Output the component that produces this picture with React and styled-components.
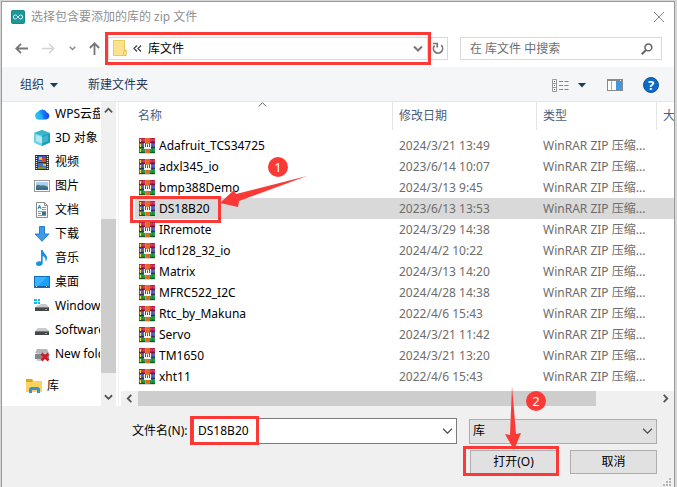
import React from "react";
import styled, { createGlobalStyle } from "styled-components";

const RED = "#fb3a38";

const GlobalStyle = createGlobalStyle`
  * { box-sizing: border-box; }
  body {
    margin: 0;
    background: #d6d6d6;
    font-family: "Noto Sans", "Noto Sans CJK SC", sans-serif;
    font-size: 12px;
    line-height: 16px;
    color: #000;
  }
  button, input, select { font: inherit; color: inherit; }
  svg { display: block; flex: none; }
`;

const Page = styled.div`
  min-height: 100vh;
  padding: 1px 2px 0 1px;
  display: flex;
  overflow: hidden;
`;

const Dialog = styled.main`
  flex: 1;
  min-width: 0;
  display: flex;
  flex-direction: column;
  background: #fff;
  border: 1px solid #999;
  border-bottom: 0;
`;

const TitleBar = styled.header`
  display: flex;
  align-items: center;
  gap: 6px;
  height: 29px;
  padding: 0 9px;
`;

const Title = styled.h1`
  flex: 1;
  margin: 0;
  font-size: 12px;
  font-weight: 400;
  color: #8f8f8f;
`;

const IconButton = styled.button`
  display: flex;
  align-items: center;
  justify-content: center;
  width: ${(p) => p.$width || 16}px;
  height: 20px;
  padding: 0;
  border: 0;
  background: transparent;
`;

const NavBar = styled.div`
  display: flex;
  align-items: center;
  height: 36px;
  padding: 6px 12px 7px 11px;
`;

const NavButtons = styled.div`
  display: flex;
  align-items: center;
  width: 95px;
  gap: 11px;
`;

const Marked = styled.div`
  position: relative;
  display: flex;
  ${(p) => p.$grow && "flex: 1; min-width: 0;"}
`;

const RedFrame = styled.span`
  position: absolute;
  inset: ${(p) => p.$inset};
  ${(p) => p.$width && `width: ${p.$width}px;`}
  border: 3px solid ${RED};
  pointer-events: none;
`;

const Address = styled.div`
  flex: 1;
  display: flex;
  align-items: center;
  gap: 6px;
  height: 23px;
  padding: 0 1px 0 4px;
  border: 1px solid #d9d9d9;
`;

const AddressText = styled.span`
  flex: 1;
`;

const Refresh = styled.button`
  display: flex;
  align-items: center;
  justify-content: center;
  width: 20px;
  height: 23px;
  padding: 0;
  border: 1px solid #d9d9d9;
  border-left: 0;
  background: #fff;
`;

const Search = styled.label`
  display: flex;
  align-items: center;
  width: 202px;
  height: 23px;
  margin-left: 12px;
  padding: 0 8px 0 9px;
  border: 1px solid #d9d9d9;
`;

const SearchInput = styled.input`
  flex: 1;
  min-width: 0;
  padding: 0;
  border: 0;
  outline: 0;
  &::placeholder { color: #6d6d6d; opacity: 1; }
`;

const Toolbar = styled.div`
  display: flex;
  align-items: center;
  height: 35px;
  padding: 2px 15px 0 18px;
  background: #f5f6f7;
  border-bottom: 1px solid #e6e7e8;
  color: #1e395b;
`;

const ToolButton = styled.button`
  display: flex;
  align-items: center;
  gap: ${(p) => p.$gap || 6}px;
  margin-right: ${(p) => p.$after || 0}px;
  padding: 0;
  border: 0;
  background: transparent;
`;

const Spacer = styled.div`
  flex: 1;
`;

const Body = styled.div`
  display: flex;
`;

const Sidebar = styled.nav`
  width: 99px;
  padding-right: 1px;
`;

const Tree = styled.ul`
  margin: 0;
  padding: 0;
  overflow: hidden;
  list-style: none;
`;

const TreeItem = styled.li`
  margin-top: ${(p) => (p.$root ? 8 : 0)}px;
  padding-left: ${(p) => (p.$root ? 24 : 32)}px;
`;

const TreeLink = styled.a`
  display: flex;
  align-items: center;
  gap: 5px;
  height: 24px;
  color: #000;
  text-decoration: none;
  white-space: nowrap;
`;

const VScroll = styled.div`
  display: flex;
  flex-direction: column;
  width: 15px;
  background: #f0f0f0;
`;

const HScroll = styled.div`
  display: flex;
  height: 15px;
  margin-left: 2px;
  background: #f0f0f0;
`;

const ScrollButton = styled.button`
  display: flex;
  align-items: center;
  justify-content: center;
  flex: none;
  width: ${(p) => (p.$wide ? 17 : 15)}px;
  height: ${(p) => (p.$wide ? 15 : 17)}px;
  padding: 0;
  border: 0;
  background: transparent;
`;

const Track = styled.div`
  flex: 1;
  display: flex;
  flex-direction: ${(p) => (p.$vertical ? "column" : "row")};
`;

const TrackGap = styled.div`
  flex: ${(p) => p.$share};
`;

const Thumb = styled.div`
  flex: ${(p) => p.$share};
  background: #cdcdcd;
`;

const Files = styled.section`
  position: relative;
  flex: 1;
  min-width: 0;
  display: flex;
  flex-direction: column;
  margin-left: 2px;
  border-left: 1px solid #f0f0f0;
`;

const SortMark = styled.span`
  position: absolute;
  top: -2px;
  left: 139px;
`;

const Table = styled.table`
  width: 100%;
  table-layout: fixed;
  border-collapse: separate;
  border-spacing: 0;
  margin-bottom: 4px;
`;

const Head = styled.th`
  height: 28px;
  padding: 0 0 0 ${(p) => (p.$first ? 19 : 6)}px;
  border-left: ${(p) => (p.$first ? 0 : 1)}px solid #e5e5e5;
  overflow: hidden;
  white-space: nowrap;
  text-align: left;
  font-weight: 400;
  color: #4c607a;
`;

const HeadSpace = styled.tr`
  height: 5px;
`;

const Row = styled.tr`
  height: 21px;
  background: linear-gradient(${(p) => (p.$selected ? "#d9d9d9, #d9d9d9" : "#fff, #fff")}) 16px 0 no-repeat;
`;

const Cell = styled.td`
  height: 21px;
  padding: 0 0 0 7px;
  overflow: hidden;
  white-space: nowrap;
  color: #6d6d6d;
`;

const NameCell = styled(Cell)`
  padding-left: 20px;
  overflow: visible;
  color: #000;
`;

const FileName = styled.div`
  position: relative;
  display: flex;
  align-items: center;
  gap: 4px;
`;

const Footer = styled.form`
  position: relative;
  flex: 1;
  display: flex;
  flex-direction: column;
  gap: 6px;
  padding: 12px 17px 13px 130px;
  background: #f0f0f0;
`;

const FooterRow = styled.div`
  display: flex;
  justify-content: ${(p) => (p.$end ? "flex-end" : "flex-start")};
  gap: ${(p) => (p.$end ? 13 : 12)}px;
`;

const NameField = styled.div`
  flex: 1;
  display: flex;
  align-items: center;
  min-width: 0;
`;

const Label = styled.label`
  width: 61px;
  white-space: nowrap;
`;

const Combo = styled.div`
  flex: 1;
  display: flex;
  align-items: center;
  min-width: 0;
  height: 26px;
  padding: 0 1px 0 4px;
  border: 1px solid #7a7a7a;
  background: #fff;
`;

const ComboInput = styled.input`
  flex: 1;
  min-width: 0;
  padding: 0;
  border: 0;
  outline: 0;
`;

const SelectBox = styled.div`
  display: grid;
  align-items: center;
  width: 188px;
  & > * { grid-area: 1 / 1; }
  & > svg { justify-self: end; margin-right: 4px; pointer-events: none; }
`;

const Select = styled.select`
  appearance: none;
  width: 100%;
  height: 25px;
  padding: 0 20px 0 3px;
  border: 1px solid #adadad;
  border-radius: 0;
  background: #e1e1e1;
`;

const PushButton = styled.button`
  width: 87px;
  height: 24px;
  padding: 0;
  border: 1px solid #adadad;
  background: #e1e1e1;
`;

const Grip = styled.span`
  position: absolute;
  right: 3px;
  bottom: 1px;
`;

const Badge = styled.span`
  position: absolute;
  left: ${(p) => p.$left}px;
  top: ${(p) => p.$top}px;
  display: flex;
  align-items: center;
  justify-content: center;
  width: 20px;
  height: 20px;
  border-radius: 50%;
  background: ${RED};
  color: #fff;
  font-size: 13px;
`;

const Pointer = styled.span`
  position: absolute;
  z-index: 1;
  left: ${(p) => p.$left}px;
  top: ${(p) => p.$top}px;
  pointer-events: none;
`;

const Chevron = ({ dir = "down", size = 9, color = "#555", weight = 2 }) => {
  const d = {
    down: "M1 2.5L5 6.5L9 2.5",
    up: "M1 7L5 3L9 7",
    left: "M7 1L3 5L7 9",
    right: "M3 1L7 5L3 9",
  }[dir];
  return (
    <svg width={size} height={size} viewBox="0 0 10 10" fill="none" stroke={color} strokeWidth={weight} aria-hidden="true">
      <path d={d} />
    </svg>
  );
};

const Triangle = () => (
  <svg width="8" height="5" viewBox="0 0 8 5" aria-hidden="true">
    <path d="M0 0H8L4 4.6Z" fill="#1e395b" />
  </svg>
);

const NavArrow = ({ color, up }) => (
  <svg width="13" height="13" viewBox="0 0 13 13" fill="none" stroke={color} strokeWidth="1.8" aria-hidden="true">
    <path d={up ? "M6.5 13V1.5M1.8 6L6.5 1.3L11.2 6" : "M13 6.5H1.5M6 1.8L1.3 6.5L6 11.2"} />
  </svg>
);

const ForwardArrow = () => (
  <svg width="13" height="13" viewBox="0 0 13 13" fill="none" stroke="#d4d4d4" strokeWidth="1.5" aria-hidden="true">
    <path d="M0 6.5H11.5M7 1.8L11.7 6.5L7 11.2" />
  </svg>
);

const ArduinoIcon = () => (
  <svg width="14" height="14" viewBox="0 0 14 14" aria-hidden="true">
    <rect width="14" height="14" rx="2" fill="#16878c" />
    <rect x="1" y="1" width="12" height="12" rx="1" fill="#1d979b" />
    <path d="M7 7C6 5.6 5.3 5 4.4 5a2 2 0 0 0 0 4C5.3 9 6 8.4 7 7s1.7-2 2.6-2a2 2 0 0 1 0 4C8.7 9 8 8.4 7 7Z" fill="none" stroke="#dff5f3" />
  </svg>
);

const FolderIcon = () => (
  <svg width="14" height="17" viewBox="0 0 14 17" aria-hidden="true">
    <path d="M.5 .5H11.5V9.5L13 10V15.5H.5Z" fill="#fde28d" stroke="#edc65c" />
    <path d="M11 10.5h2V15.5H10.5Z" fill="#fff0b4" stroke="#e8bd48" />
  </svg>
);

const ZipIcon = () => (
  <svg width="16" height="16" viewBox="0 0 16 16" aria-hidden="true">
    <rect y="15" width="16" height="1" fill="#d9d5d5" />
    <rect width="16" height="5" fill="#c21e4c" />
    <rect y="1" width="16" height="2" fill="#d93862" />
    <rect y="4" width="16" height="1" fill="#82153a" />
    <rect y="5" width="16" height="5" fill="#5052b5" />
    <rect y="6" width="16" height="2" fill="#6264c6" />
    <rect y="9" width="16" height="1" fill="#30306f" />
    <rect y="10" width="16" height="5" fill="#159340" />
    <rect y="11" width="16" height="2" fill="#1fa048" />
    <rect y="14" width="16" height="1" fill="#0c6127" />
    <path d="M1 1h1v3H1zM1 6h1v3H1zM1 11h1v3H1z" fill="#f6dc4c" />
    <path d="M3 0h1v15H3zM13 0h1v15h-1z" fill="#222" opacity=".2" />
    <rect x="6" width="5" height="15" fill="#e56a20" />
    <rect x="6" width="1" height="15" fill="#f08238" />
    <rect x="5" y="5" width="7" height="6" fill="#f1eeee" />
    <rect x="6" y="5" width="5" height="4" fill="#b8322c" />
    <path d="M7 5h3v2H7z" fill="#eb7b32" />
    <path d="M7 6h1v4H7zM9 6h1v4H9z" fill="#fff" />
  </svg>
);

const CloudIcon = () => (
  <svg width="16" height="16" viewBox="0 0 16 16" aria-hidden="true">
    <defs>
      <linearGradient id="cloud" x1="0" x2="1">
        <stop offset="0" stopColor="#22cdf4" />
        <stop offset=".55" stopColor="#1a7dfb" />
        <stop offset="1" stopColor="#1846df" />
      </linearGradient>
    </defs>
    <path d="M4.5 13.5a3.8 3.8 0 0 1-.6-7.4A5 5 0 0 1 12.8 6.5 3.6 3.6 0 0 1 12 13.5Z" fill="url(#cloud)" />
    <path d="M4 6.2c3 .2 4.3 3 6 7.3H4.5a3.8 3.8 0 0 1-.5-7.3Z" fill="#24c5f7" opacity=".6" />
  </svg>
);

const CubeIcon = () => (
  <svg width="16" height="16" viewBox="0 0 16 16" aria-hidden="true">
    <path d="M0 3L8 0L16 3V12.5L8 16L0 12.5Z" fill="#5fcbdb" />
    <path d="M0 3L8 5.5V16L0 12.5Z" fill="#6dd3e0" />
    <path d="M16 3L8 5.5V16L16 12.5Z" fill="#1f9fb8" />
    <path d="M0 3L8 0L16 3L8 5.5Z" fill="#3ab5cb" />
    <path d="M2 5L8 7V13.5L2 11Z" fill="#b4ebf2" />
    <path d="M8 7L14 5V11L8 13.5Z" fill="#3db5ca" />
  </svg>
);

const FilmIcon = () => (
  <svg width="16" height="16" viewBox="0 0 16 16" aria-hidden="true">
    <rect x="1" y="1" width="14" height="15" fill="#2f3034" />
    <path d="M2.5 2V16M13.5 2V16" stroke="#e8e8e8" strokeWidth="1.4" strokeDasharray="1 1" />
    <rect x="4" y="2" width="8" height="6" fill="#2c5fc0" />
    <rect x="4" y="9" width="8" height="6" fill="#327ad0" />
    <path d="M5 3h3v3H5zM9 10h3v2H9z" fill="#efb62e" />
    <path d="M8 4h3v3H8zM5 11h2v2H5z" fill="#d5482b" />
    <path d="M4 7h8v1H4zM4 13h8v2H4z" fill="#7a942d" />
  </svg>
);

const PictureIcon = () => (
  <svg width="16" height="16" viewBox="0 0 16 16" aria-hidden="true">
    <rect x=".5" y="2.5" width="15" height="11" fill="#fff" stroke="#999" />
    <rect x="2" y="4" width="12" height="8" fill="#a6d2f2" />
    <path d="M2 8C4 5 6 8 8 7.5S12 8 14 9V12H2Z" fill="#50717c" />
    <path d="M2 10H14V12H2Z" fill="#316b9f" />
  </svg>
);

const DocumentIcon = () => (
  <svg width="16" height="16" viewBox="0 0 16 16" aria-hidden="true">
    <path d="M2.5 .5H10.5L13.5 3.5V15.5H2.5Z" fill="#fff" stroke="#8b8b8b" />
    <path d="M10.5 .5V3.5H13.5" fill="none" stroke="#8b8b8b" />
    <path d="M4 7L5.5 3L7 7M4.6 5.5H6.5" fill="none" stroke="#2485c7" />
    <path d="M8 5.5H12M8 7.5H12M4 9.5H12M4 13.5H12" stroke="#55a6d9" />
    <path d="M4 11.5H7" stroke="#55a6d9" />
    <rect x="8" y="10" width="4" height="3" fill="#3d7183" />
  </svg>
);

const DownloadIcon = () => (
  <svg width="16" height="16" viewBox="0 0 16 16" aria-hidden="true">
    <path d="M5.5 .5H10.5V8H15L8 15.3L1 8H5.5Z" fill="#3e9bea" stroke="#287dc8" />
  </svg>
);

const MusicIcon = () => (
  <svg width="16" height="16" viewBox="0 0 16 16" aria-hidden="true">
    <path d="M7 0H8.7C9 3 13 4.2 13 8c0 1.8-.8 3-1.6 3.7C12 8.5 10.8 7 8.7 6V13c0 1.7-1.6 3-3.6 3S2 15 2 13.7s1.4-2.5 3.2-2.5c.7 0 1.3.1 1.8.4Z" fill="#1792e5" />
  </svg>
);

const DesktopIcon = () => (
  <svg width="16" height="16" viewBox="0 0 16 16" aria-hidden="true">
    <rect x=".5" y="2.5" width="15" height="11" fill="#1ba0f6" stroke="#0f6fb9" />
    <path d="M1 3H13L4 12H1Z" fill="#38b3ff" />
    <rect x="1" y="12" width="14" height="1" fill="#0b63a7" />
    <path d="M2 12h1v1H2zM12 12h1v1h-1z" fill="#fff" />
  </svg>
);

const DriveIcon = ({ windows, missing }) => (
  <svg width="16" height="16" viewBox="0 0 16 16" aria-hidden="true">
    {windows && <path d="M0 1h3v2H0zM4 1h2v2H4zM0 4h3v2H0zM4 4h2v2H4z" fill="#13b8ef" />}
    <path d={windows ? "M7 6H12L15 9H2L3 7.5Z" : "M4 6H12L15 9H1Z"} fill="#c8c9cc" />
    <rect x="1" y="9" width="14" height="4" fill="#45474b" />
    <rect x="1" y="9" width="14" height="1" fill="#77797d" />
    <rect x="11" y="11" width="2" height="1" fill="#3de04a" />
    {missing && (
      <>
        <path d="M3 3H13L15 7H1Z" fill="#b4b5b8" />
        <rect x="1" y="8" width="14" height="5" fill="#85868a" />
        <path d="M3 14H7" stroke="#999" />
        <path d="M7.5 7.5L14.5 14.5M14.5 7.5L7.5 14.5" stroke="#dc1424" strokeWidth="2.6" />
      </>
    )}
  </svg>
);

const LibraryIcon = () => (
  <svg width="16" height="16" viewBox="0 0 16 16" aria-hidden="true">
    <path d="M0 1H6L8 3H16V14H0Z" fill="#fbd25e" />
    <path d="M0 1H6L7 3L6 4H0Z" fill="#e2a51c" />
    <path d="M3 15V10.5L5 9H12L14 10.5V15H11V12H6V15Z" fill="#3591da" />
  </svg>
);

const RefreshIcon = () => (
  <svg width="12" height="13" viewBox="0 0 12 13" fill="none" stroke="#777" strokeWidth="1.7" aria-hidden="true">
    <path d="M9.2 3.2A4.6 4.6 0 1 1 2.5 3.6" />
    <path d="M1 1.5H5.2V5.5" />
  </svg>
);

const SearchIcon = () => (
  <svg width="12" height="12" viewBox="0 0 12 12" fill="none" stroke="#666" aria-hidden="true">
    <circle cx="7.4" cy="4.4" r="3.4" strokeWidth="1.6" />
    <path d="M5 7L.8 11.2" strokeWidth="2" />
  </svg>
);

const ViewIcon = () => (
  <svg width="17" height="13" viewBox="0 0 17 13" aria-hidden="true">
    <path d="M.5 .5H4.5V12.5H.5ZM.5 4.5H4.5M.5 8.5H4.5" fill="#fff" stroke="#989898" />
    <path d="M7 2.5h4M12.5 2.5h4M7 6.5h4M12.5 6.5h4M7 10.5h4M12.5 10.5h4" stroke="#858585" />
    <path d="M2 2h1v1H2z" fill="#444" />
    <path d="M2 6h1v1H2z" fill="#3480c6" />
    <path d="M2 10h1v1H2z" fill="#c33" />
  </svg>
);

const PaneIcon = () => (
  <svg width="16" height="12" viewBox="0 0 16 12" aria-hidden="true">
    <rect x=".5" y=".5" width="15" height="11" fill="#fff" stroke="#8a8a8a" />
    <path d="M0 0H16V2H0Z" fill="#8a8a8a" />
    <path d="M4.5 2V11" stroke="#aaa" />
    <rect x="9" y="2" width="6" height="9" fill="#3d9ae2" />
    <path d="M13 1h1v1h-1z" fill="#fff" />
  </svg>
);

const HelpBadge = styled.span`
  display: flex;
  align-items: center;
  justify-content: center;
  width: 16px;
  height: 16px;
  border: 1px solid #17558f;
  border-radius: 50%;
  background: #0a6bcd;
  color: #fff;
  font-size: 13px;
  font-weight: 700;
`;

const places = [
  ["WPS云盘", CloudIcon],
  ["3D 对象", CubeIcon],
  ["视频", FilmIcon],
  ["图片", PictureIcon],
  ["文档", DocumentIcon],
  ["下载", DownloadIcon],
  ["音乐", MusicIcon],
  ["桌面", DesktopIcon],
  ["Windows", DriveIcon, { windows: true }],
  ["Software", DriveIcon],
  ["New folder", DriveIcon, { missing: true }],
  ["库", LibraryIcon, {}, true],
];

const files = [
  ["Adafruit_TCS34725", "2024/3/21 13:49"],
  ["adxl345_io", "2023/6/14 10:07"],
  ["bmp388Demo", "2024/3/13 9:45"],
  ["DS18B20", "2023/6/13 13:53"],
  ["IRremote", "2024/3/29 14:38"],
  ["lcd128_32_io", "2024/4/2 10:22"],
  ["Matrix", "2024/3/13 14:20"],
  ["MFRC522_I2C", "2024/4/28 14:38"],
  ["Rtc_by_Makuna", "2022/4/6 15:43"],
  ["Servo", "2024/3/21 11:42"],
  ["TM1650", "2024/3/21 13:20"],
  ["xht11", "2022/4/6 15:43"],
];

const SELECTED = "DS18B20";

export default function App() {
  return (
    <Page>
      <GlobalStyle />
      <Dialog>
        <TitleBar>
          <ArduinoIcon />
          <Title>选择包含要添加的库的 zip 文件</Title>
          <IconButton $width={12} aria-label="关闭">
            <svg width="12" height="12" viewBox="0 0 12 12" stroke="#888" aria-hidden="true">
              <path d="M1 1L11 11M11 1L1 11" />
            </svg>
          </IconButton>
        </TitleBar>

        <NavBar>
          <NavButtons>
            <IconButton aria-label="后退"><NavArrow color="#777" /></IconButton>
            <IconButton aria-label="前进"><ForwardArrow /></IconButton>
            <IconButton $width={10} aria-label="最近位置"><Chevron size={7} color="#888" /></IconButton>
            <IconButton $width={13} aria-label="上移"><NavArrow color="#777" up /></IconButton>
          </NavButtons>
          <Marked $grow>
            <Address>
              <FolderIcon />
              <svg width="9" height="7" viewBox="0 0 9 7" fill="none" stroke="#444" strokeWidth="1.3" aria-hidden="true">
                <path d="M4 .5L1 3.5L4 6.5M8 .5L5 3.5L8 6.5" />
              </svg>
              <AddressText>库文件</AddressText>
              <IconButton aria-label="展开地址"><Chevron size={10} color="#777" /></IconButton>
            </Address>
            <RedFrame $inset="-5px -3px" />
          </Marked>
          <Refresh aria-label="刷新"><RefreshIcon /></Refresh>
          <Search>
            <SearchInput type="text" aria-label="搜索" placeholder="在 库文件 中搜索" />
            <SearchIcon />
          </Search>
        </NavBar>

        <Toolbar>
          <ToolButton $after={30}>组织<Triangle /></ToolButton>
          <ToolButton>新建文件夹</ToolButton>
          <Spacer />
          <ToolButton $gap={9} $after={21} aria-label="更改视图"><ViewIcon /><Triangle /></ToolButton>
          <ToolButton $after={20} aria-label="预览窗格"><PaneIcon /></ToolButton>
          <ToolButton aria-label="帮助"><HelpBadge>?</HelpBadge></ToolButton>
        </Toolbar>

        <Body>
          <Sidebar>
            <Tree>
              {places.map(([name, Icon, props, root]) => (
                <TreeItem key={name} $root={root}>
                  <TreeLink href="#"><Icon {...props} />{name}</TreeLink>
                </TreeItem>
              ))}
            </Tree>
          </Sidebar>
          <VScroll>
            <ScrollButton aria-label="向上滚动"><Chevron dir="up" /></ScrollButton>
            <Track $vertical>
              <TrackGap $share={100} />
              <Thumb $share={154} />
              <TrackGap $share={16} />
            </Track>
            <ScrollButton aria-label="向下滚动"><Chevron /></ScrollButton>
          </VScroll>

          <Files>
            <SortMark><Chevron dir="up" color="#555" weight={1} /></SortMark>
            <Table>
              <colgroup>
                <col />
                <col width="144" />
                <col width="120" />
                <col width="18" />
              </colgroup>
              <thead>
                <tr>
                  <Head $first scope="col">名称</Head>
                  <Head scope="col">修改日期</Head>
                  <Head scope="col">类型</Head>
                  <Head scope="col">大小</Head>
                </tr>
              </thead>
              <tbody>
                <HeadSpace aria-hidden="true" />
                {files.map(([name, date]) => (
                  <Row key={name} $selected={name === SELECTED}>
                    <NameCell>
                      <FileName>
                        <ZipIcon />
                        {name}
                        {name === SELECTED && (
                          <>
                            <RedFrame $inset="-5px auto -6px -9px" $width={91} />
                            <Pointer $left={81} $top={-25}>
                              <svg width="88" height="34" viewBox="0 0 88 34" aria-hidden="true">
                                <path d="M0 27L14 14L16 18L87 0L19 25L18 31Z" fill={RED} />
                              </svg>
                            </Pointer>
                            <Badge $left={129} $top={-44}>1</Badge>
                          </>
                        )}
                      </FileName>
                    </NameCell>
                    <Cell>{date}</Cell>
                    <Cell>WinRAR ZIP 压缩...</Cell>
                    <Cell />
                  </Row>
                ))}
              </tbody>
            </Table>
            <HScroll>
              <ScrollButton $wide aria-label="向左滚动"><Chevron dir="left" /></ScrollButton>
              <Track>
                <Thumb $share={458} />
                <TrackGap $share={61} />
              </Track>
              <ScrollButton $wide aria-label="向右滚动"><Chevron dir="right" /></ScrollButton>
            </HScroll>
          </Files>
        </Body>

        <Footer onSubmit={(e) => e.preventDefault()}>
          <FooterRow>
            <NameField>
              <Label htmlFor="file-name">文件名(N):</Label>
              <Marked $grow>
                <Combo>
                  <ComboInput id="file-name" type="text" defaultValue="DS18B20" />
                  <IconButton type="button" aria-label="文件名历史"><Chevron size={11} color="#444" weight={1} /></IconButton>
                </Combo>
                <RedFrame $inset="-2px auto -1px -3px" $width={69} />
              </Marked>
            </NameField>
            <SelectBox>
              <Select aria-label="文件类型" defaultValue="lib">
                <option value="lib">库</option>
              </Select>
              <Chevron size={11} color="#444" weight={1} />
            </SelectBox>
          </FooterRow>
          <FooterRow $end>
            <Marked>
              <PushButton type="submit">打开(O)</PushButton>
              <RedFrame $inset="-4px -2px -2px -7px" />
              <Pointer $left={34} $top={-64}>
                <svg width="18" height="64" viewBox="0 0 18 64" aria-hidden="true">
                  <path d="M8 0L12 48L17 47L10 64L1 48L6 49Z" fill={RED} />
                </svg>
              </Pointer>
              <Badge $left={56} $top={-59}>2</Badge>
            </Marked>
            <PushButton type="button">取消</PushButton>
          </FooterRow>
          <Grip>
            <svg width="8" height="8" viewBox="0 0 8 8" fill="#b5b5b5" aria-hidden="true">
              <path d="M6 0h2v2H6zM3 3h2v2H3zM6 3h2v2H6zM0 6h2v2H0zM3 6h2v2H3zM6 6h2v2H6z" />
            </svg>
          </Grip>
        </Footer>
      </Dialog>
    </Page>
  );
}
